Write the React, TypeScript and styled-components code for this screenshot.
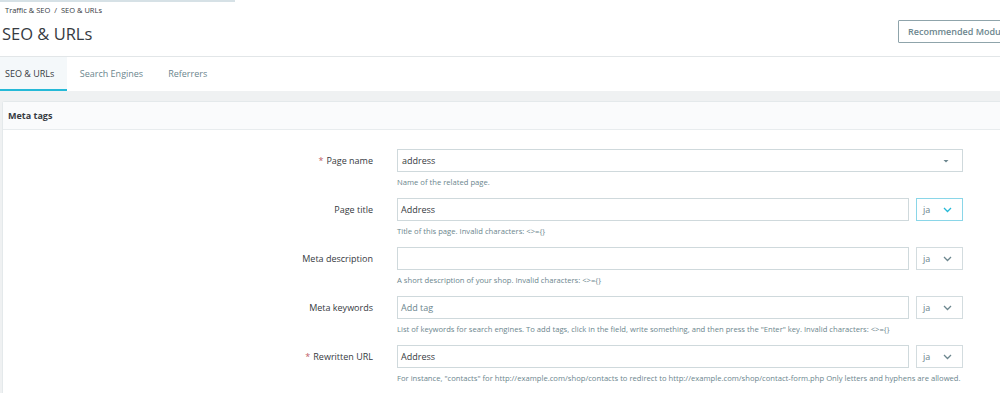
import React from "react";
import styled, { createGlobalStyle } from "styled-components";

const GlobalStyle = createGlobalStyle`
  html, body { margin: 0; padding: 0; background: #ffffff; }
  body {
    font-family: "Open Sans", "Noto Sans", "Liberation Sans", sans-serif;
    color: #363a41;
    overflow: hidden;
    width: 1000px;
    height: 393px;
  }
  * { box-sizing: border-box; }
`;

const Page = styled.div`
  width: 1000px;
  height: 393px;
  overflow: hidden;
  display: flex;
  flex-direction: column;
`;

const TopStrip = styled.div`
  width: 235px;
  height: 2px;
  background: #d6e1e6;
  flex-shrink: 0;
`;

const Header = styled.header`
  display: flex;
  justify-content: space-between;
  align-items: flex-start;
  height: 55px;
  border-bottom: 1px solid #e2e6e8;
  flex-shrink: 0;
`;

const TitleBlock = styled.div`
  display: flex;
  flex-direction: column;
  padding: 3px 0 0 2px;
`;

const Breadcrumb = styled.div`
  font-size: 7.5px;
  line-height: 11px;
  color: #363a41;
  padding-left: 3px;
`;

const Title = styled.h1`
  margin: 7px 0 0 0;
  font-size: 16.5px;
  font-weight: 400;
  line-height: 22px;
  color: #363a41;
`;

const HeaderButton = styled.button`
  margin-top: 18px;
  margin-right: -28px;
  height: 23px;
  width: 130px;
  padding: 0 0 0 9px;
  text-align: left;
  white-space: nowrap;
  overflow: hidden;
  background: #ffffff;
  border: 1px solid #8fa4ab;
  border-radius: 1px;
  font-family: "Open Sans", sans-serif;
  font-size: 9px;
  font-weight: 600;
  color: #6c868e;
`;

const TabBar = styled.nav`
  display: flex;
  height: 34px;
  flex-shrink: 0;
  background: #ffffff;
`;

const Tab = styled.div<{ $active?: boolean; $first?: boolean }>`
  display: flex;
  align-items: center;
  height: 100%;
  padding: ${(p) => (p.$first ? "1px 13px 0 5px" : "1px 12.5px 0")};
  font-size: 9px;
  color: ${(p) => (p.$active ? "#363a41" : "#6c868e")};
  background: ${(p) => (p.$active ? "#f4f8fa" : "transparent")};
  border-bottom: 2px solid ${(p) => (p.$active ? "#25b9d7" : "transparent")};
`;

const Content = styled.main`
  flex: 1;
  min-height: 0;
  overflow: hidden;
  background: #eff1f2;
  padding: 10px 0 0 2px;
`;

const Panel = styled.section`
  background: #ffffff;
  border: 1px solid #e4e9eb;
  border-right: none;
  border-radius: 3px 0 0 0;
  height: calc(100% + 20px);
`;

const PanelHeader = styled.div`
  height: 28px;
  display: flex;
  align-items: center;
  padding-left: 5px;
  background: #fafbfc;
  border-bottom: 1px solid #e8ecee;
  font-size: 9px;
  font-weight: 700;
  color: #363a41;
`;

const PanelBody = styled.div`
  padding-top: 19px;
  display: flex;
  flex-direction: column;
  gap: 10px;
`;

const FormRow = styled.div`
  display: grid;
  grid-template-columns: 370px 566px;
  column-gap: 24px;
`;

const Label = styled.label`
  text-align: right;
  font-size: 9px;
  line-height: 23px;
  color: #363a41;
`;

const Required = styled.span`
  color: #c05c67;
  margin-right: 3px;
`;

const Field = styled.div`
  display: flex;
  flex-direction: column;
`;

const InputLine = styled.div`
  display: flex;
  gap: 7px;
`;

const TextBox = styled.div`
  flex: 1;
  height: 23px;
  border: 1px solid #cfd9dc;
  display: flex;
  align-items: center;
  padding: 0 6px 0 3px;
  font-size: 9px;
  color: #363a41;
`;

const Placeholder = styled.span`
  color: #6c868e;
`;

const SelectBox = styled(TextBox)`
  flex: none;
  justify-content: space-between;
  padding: 0 13px 0 4px;
`;

const LangButton = styled.div<{ $active?: boolean }>`
  width: 47px;
  height: 23px;
  border: 1px solid ${(p) => (p.$active ? "#8ad6e8" : "#d3dcdf")};
  display: flex;
  align-items: center;
  justify-content: space-between;
  padding: 0 10px 0 6px;
  font-size: 9px;
  color: #6c868e;
`;

const Help = styled.div`
  margin-top: 5px;
  font-size: 7.65px;
  line-height: 11px;
  color: #6c868e;
  white-space: nowrap;
`;

const Caret = () => (
  <svg width="6" height="4" viewBox="0 0 6 4">
    <polygon points="0.5,1 5.5,1 3,3.5" fill="#6c868e" />
  </svg>
);

const Chevron = ({ color }: { color: string }) => (
  <svg width="9" height="6" viewBox="0 0 9 6">
    <polyline points="1,1 4.5,4.5 8,1" fill="none" stroke={color} strokeWidth="1.3" />
  </svg>
);

type Row = {
  label: string;
  required?: boolean;
  value?: string;
  placeholder?: string;
  kind: "select" | "lang";
  activeLang?: boolean;
  help: string;
};

const rows: Row[] = [
  { label: "Page name", required: true, value: "address", kind: "select", help: "Name of the related page." },
  { label: "Page title", value: "Address", kind: "lang", activeLang: true, help: "Title of this page. Invalid characters: <>={}" },
  { label: "Meta description", value: "", kind: "lang", help: "A short description of your shop. Invalid characters: <>={}" },
  {
    label: "Meta keywords",
    placeholder: "Add tag",
    kind: "lang",
    help: 'List of keywords for search engines. To add tags, click in the field, write something, and then press the "Enter" key. Invalid characters: <>={}',
  },
  {
    label: "Rewritten URL",
    required: true,
    value: "Address",
    kind: "lang",
    help: 'For instance, "contacts" for http://example.com/shop/contacts to redirect to http://example.com/shop/contact-form.php Only letters and hyphens are allowed.',
  },
];

export default function App() {
  return (
    <>
      <GlobalStyle />
      <Page>
        <TopStrip />
        <Header>
          <TitleBlock>
            <Breadcrumb>Traffic &amp; SEO&nbsp; /&nbsp; SEO &amp; URLs</Breadcrumb>
            <Title>SEO &amp; URLs</Title>
          </TitleBlock>
          <HeaderButton>Recommended Modules and Services</HeaderButton>
        </Header>
        <TabBar>
          <Tab $active $first>SEO &amp; URLs</Tab>
          <Tab>Search Engines</Tab>
          <Tab>Referrers</Tab>
        </TabBar>
        <Content>
          <Panel>
            <PanelHeader>Meta tags</PanelHeader>
            <PanelBody>
              {rows.map((r) => (
                <FormRow key={r.label}>
                  <Label>
                    {r.required && <Required>*</Required>}
                    {r.label}
                  </Label>
                  <Field>
                    {r.kind === "select" ? (
                      <SelectBox>
                        <span>{r.value}</span>
                        <Caret />
                      </SelectBox>
                    ) : (
                      <InputLine>
                        <TextBox>
                          {r.placeholder ? <Placeholder>{r.placeholder}</Placeholder> : r.value}
                        </TextBox>
                        <LangButton $active={r.activeLang}>
                          <span>ja</span>
                          <Chevron color={r.activeLang ? "#25b9d7" : "#6c868e"} />
                        </LangButton>
                      </InputLine>
                    )}
                    <Help>{r.help}</Help>
                  </Field>
                </FormRow>
              ))}
            </PanelBody>
          </Panel>
        </Content>
      </Page>
    </>
  );
}
